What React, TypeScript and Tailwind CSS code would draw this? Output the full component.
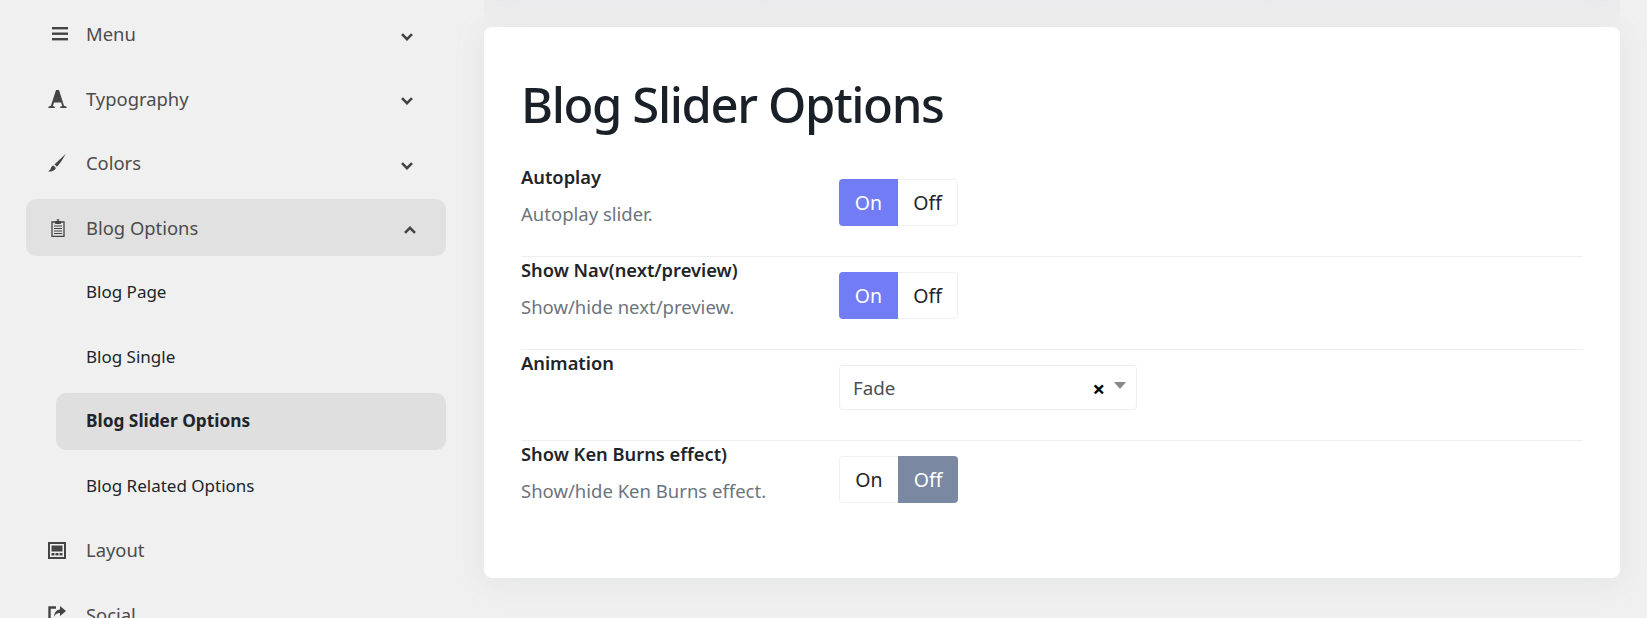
import React from "react";

const IconBars = () => (
  <svg width="16" height="14" viewBox="0 0 16 14" fill="#444"><rect y="0" width="16" height="2.4"/><rect y="5.500" width="16" height="2.4"/><rect y="11" width="16" height="2.4"/></svg>
);
const IconFont = () => (
  <svg width="19" height="18" viewBox="0 0 19 18" fill="#444"><path d="M8 0h3l5 15.800 2.600.9V18h-6.400v-1.300l2-.7-1.100-3.600H6l-1.100 3.600 2 .7V18H.4v-1.300l2.500-.9z"/></svg>
);
const IconBrush = () => (
  <svg width="18" height="18" viewBox="0 0 18 18" fill="#444"><path d="M17.600 0C15 2.500 9.500 7.500 6.500 10.500l2.500 2.300C12 9.500 15.500 4 17.600 0zM5.500 11.500c-2 .5-2.500 2-3 3.500-.3 1-1.300 1.800-2.500 2.500 2.500.5 6.500-.5 8-3.500z"/></svg>
);
const IconClip = () => (
  <svg width="14" height="18" viewBox="0 0 14 18" fill="none" stroke="#444"><path d="M1 3h12v14.300H1z" strokeWidth="1.300"/><path d="M4.500 2.500h5v2h-5z" fill="#444" strokeWidth="1"/><path d="M5.800 1h2.400" strokeWidth="1.500"/><path d="M3 7h8M3 9.500h8M3 12h8M3 14.500h8" strokeWidth="1.200"/></svg>
);
const IconLayout = () => (
  <svg width="18" height="17" viewBox="0 0 18 17"><path fillRule="evenodd" fill="#444" d="M0 0h18v17H0zM2 2v13h14V2z"/><rect x="3.500" y="3.500" width="11" height="6" fill="#444"/><rect x="3.500" y="11" width="3" height="2.500" fill="#444"/><rect x="7.500" y="11" width="3" height="2.500" fill="#444"/><rect x="11.500" y="11" width="3" height="2.500" fill="#444"/></svg>
);
const IconShare = () => (
  <svg width="18" height="18" viewBox="0 0 18 18" fill="none"><path d="M8 1.500H1.500v15H15V12" stroke="#444" strokeWidth="2.400"/><path d="M12 0l6 5-6 5V7c-3 0-5 1-6 4 0-4 2-7 6-7.500z" fill="#444"/></svg>
);
const Chevron = ({ up }: { up: boolean }) => (
  <svg width="12" height="8" viewBox="0 0 12 8" fill="none" stroke="#444" strokeWidth="2.600">
    <path d={up ? "M1 6.800l5-5 5 5" : "M1 1.200l5 5 5-5"} />
  </svg>
);

function NavItem({ icon, label, open, active, pad }: { icon: React.ReactNode; label: string; open?: boolean; active?: boolean; pad: string }) {
  return (
    <div className={`flex items-center h-[57px] mb-[7.5px] ml-[26px] w-[420px] rounded-[10px] ${active ? "bg-[#e1e1e1]" : ""}`}>
      <span className={`w-[60px] flex items-center shrink-0 ${pad}`}>{icon}</span>
      <span className="flex-1 text-[18.4px] text-[#4c4c4c]">{label}</span>
      {open !== undefined && (
        <span className={`pt-[5px] ${active ? "mr-[30px]" : "mr-[33px]"}`}>
          <Chevron up={open} />
        </span>
      )}
    </div>
  );
}

function Sub({ label, active }: { label: string; active?: boolean }) {
  return (
    <div className={`flex items-center h-[57px] mb-[7.5px] ml-[56px] w-[390px] pl-[30px] rounded-[10px] text-[#212529] ${active ? "bg-[#dfdfdf] font-bold text-[17.3px]" : "text-[17px]"}`}>
      {label}
    </div>
  );
}

function Toggle({ on }: { on: boolean }) {
  return (
    <div className="flex w-[119px] h-[47px] text-[19.5px] leading-none rounded-[4px] overflow-hidden">
      <div className={`w-[59px] flex items-center justify-center ${on ? "bg-[#727cf5] text-white" : "border border-r-0 border-[#efefef] rounded-l-[4px] text-[#212529]"}`}>On</div>
      <div className={`w-[60px] flex items-center justify-center ${on ? "border border-l-0 border-[#efefef] rounded-r-[4px] text-[#212529]" : "bg-[#7a88a1] text-white"}`}>Off</div>
    </div>
  );
}

function Row({ label, desc, children, height, last }: { label: string; desc?: string; children: React.ReactNode; height: string; last?: boolean }) {
  return (
    <div className={`flex ${height} ${last ? "" : "border-b border-[#eeeeee]"}`}>
      <div className="w-[318px] shrink-0">
        <div className="text-[18.3px] leading-[26px] font-semibold text-[#212529]">{label}</div>
        {desc && <div className="text-[18.5px] leading-[26px] mt-[11px] text-[#6c757d]">{desc}</div>}
      </div>
      <div className="pt-[15px]">{children}</div>
    </div>
  );
}

export default function App() {
  return (
    <div className="w-[1647px] h-[618px] overflow-hidden bg-[#f0f0f0] flex font-['Noto_Sans',sans-serif]">
      <nav className="w-[484px] shrink-0 pt-[5.5px]">
        <NavItem pad="pl-[26px]" icon={<IconBars />} label="Menu" open={false} />
        <NavItem pad="pl-[22px]" icon={<IconFont />} label="Typography" open={false} />
        <NavItem pad="pl-[22px]" icon={<IconBrush />} label="Colors" open={false} />
        <NavItem pad="pl-[25px]" icon={<IconClip />} label="Blog Options" open={true} active />
        <Sub label="Blog Page" />
        <Sub label="Blog Single" />
        <Sub label="Blog Slider Options" active />
        <Sub label="Blog Related Options" />
        <NavItem pad="pl-[22px]" icon={<IconLayout />} label="Layout" />
        <NavItem pad="pl-[22px]" icon={<IconShare />} label="Social" />
      </nav>
      <main className="w-[1136px] flex flex-col">
        <div className="h-[27px] bg-linear-to-b from-[#eaeaec] to-[#f0f0f0]" />
        <div className="h-[551px] bg-white rounded-[8px] shadow-[0_4px_30px_rgba(154,161,171,0.15)] pt-[41px] px-[37px]">
          <h1 className="text-[49px] leading-[72px] tracking-[-1.4px] font-medium text-[#1a2027] mb-[24px]">Blog Slider Options</h1>
          <Row label="Autoplay" desc="Autoplay slider." height="h-[93px]">
            <Toggle on />
          </Row>
          <Row label="Show Nav(next/preview)" desc="Show/hide next/preview." height="h-[93px]">
            <Toggle on />
          </Row>
          <Row label="Animation" height="h-[91px]">
            <div className="w-[298px] h-[45px] flex items-center border border-[#eeeeee] rounded-[4px] pl-[13px] pr-[10px] text-[18.8px] text-[#495057]">
              <span className="flex-1 pt-[1px]">Fade</span>
              <span className="text-black font-bold text-[22px] mr-[9px] leading-none">×</span>
              <span className="w-0 h-0 border-l-[6px] border-r-[6px] border-t-[7px] border-l-transparent border-r-transparent border-t-[#888] mb-[4px]" />
            </div>
          </Row>
          <Row label="Show Ken Burns effect)" desc="Show/hide Ken Burns effect." height="h-[70px]" last>
            <Toggle on={false} />
          </Row>
        </div>
      </main>
    </div>
  );
}
